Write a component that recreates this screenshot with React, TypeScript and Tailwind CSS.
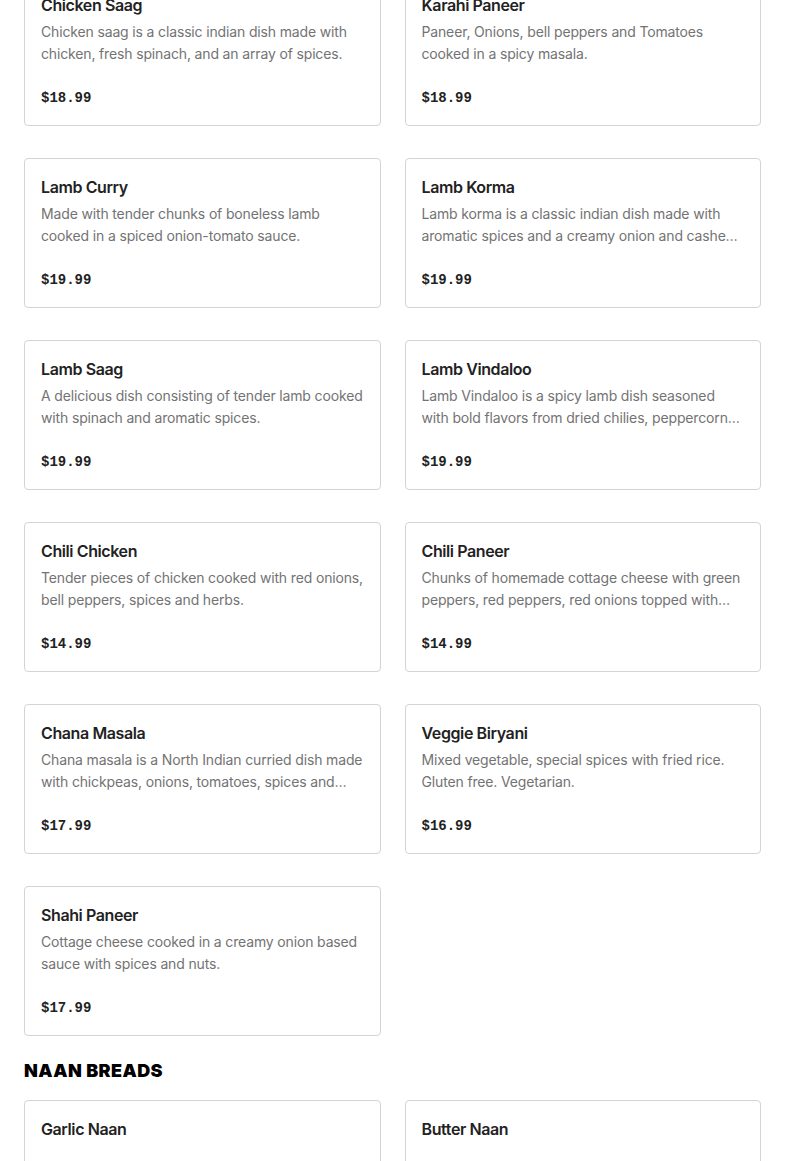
const items = [
  { name: 'Chicken Saag', text: 'Chicken saag is a classic indian dish made with chicken, fresh spinach, and an array of spices.', price: '$18.99' },
  { name: 'Karahi Paneer', text: 'Paneer, Onions, bell peppers and Tomatoes cooked in a spicy masala.', price: '$18.99' },
  { name: 'Lamb Curry', text: 'Made with tender chunks of boneless lamb cooked in a spiced onion-tomato sauce.', price: '$19.99' },
  { name: 'Lamb Korma', text: 'Lamb korma is a classic indian dish made with aromatic spices and a creamy onion and cashew sauce.', price: '$19.99' },
  { name: 'Lamb Saag', text: 'A delicious dish consisting of tender lamb cooked with spinach and aromatic spices.', price: '$19.99' },
  { name: 'Lamb Vindaloo', text: 'Lamb Vindaloo is a spicy lamb dish seasoned with bold flavors from dried chilies, peppercorns, and vinegar.', price: '$19.99' },
  { name: 'Chili Chicken', text: 'Tender pieces of chicken cooked with red onions, bell peppers, spices and herbs.', price: '$14.99' },
  { name: 'Chili Paneer', text: 'Chunks of homemade cottage cheese with green peppers, red peppers, red onions topped with cilantro.', price: '$14.99' },
  { name: 'Chana Masala', text: 'Chana masala is a North Indian curried dish made with chickpeas, onions, tomatoes, spices and herbs.', price: '$17.99' },
  { name: 'Veggie Biryani', text: 'Mixed vegetable, special spices with fried rice. Gluten free. Vegetarian.', price: '$16.99' },
  { name: 'Shahi Paneer', text: 'Cottage cheese cooked in a creamy onion based sauce with spices and nuts.', price: '$17.99' },
];

// naan cards have no description
const naan = [
  { name: 'Garlic Naan', price: '$3.99' },
  { name: 'Butter Naan', price: '$2.99' },
];

type Item = { name: string; text?: string; price: string };

function Card({ item }: { item: Item }) {
  return (
    <div className="rounded border border-[#d4d4d4] bg-white px-4 pt-4 pb-4">
      <h3 className="text-[16px] font-semibold leading-6 tracking-[-0.4px] text-[#222]">{item.name}</h3>
      {item.text && (
        <p className="mt-1 line-clamp-2 h-[44px] text-[14px] leading-[22px] tracking-[-0.15px] text-[#737373]">{item.text}</p>
      )}
      <div className="mt-[22px] font-['Liberation_Mono',monospace] text-[14px] font-bold leading-[22px] text-[#222]">{item.price}</div>
    </div>
  );
}

export default function App() {
  return (
    <div className="min-h-screen overflow-hidden bg-white px-6 font-['Inter',sans-serif]">
      <div className="-mt-6 grid grid-cols-2 gap-x-6 gap-y-8">
        {items.map((i) => (
          <Card key={i.name} item={i} />
        ))}
      </div>
      <h2 className="mt-6 mb-[18px] text-[18px] font-black uppercase leading-[22px] tracking-[0.4px] text-black">Naan Breads</h2>
      <div className="grid grid-cols-2 gap-x-6 gap-y-8">
        {naan.map((i) => (
          <Card key={i.name} item={i} />
        ))}
      </div>
    </div>
  );
}
